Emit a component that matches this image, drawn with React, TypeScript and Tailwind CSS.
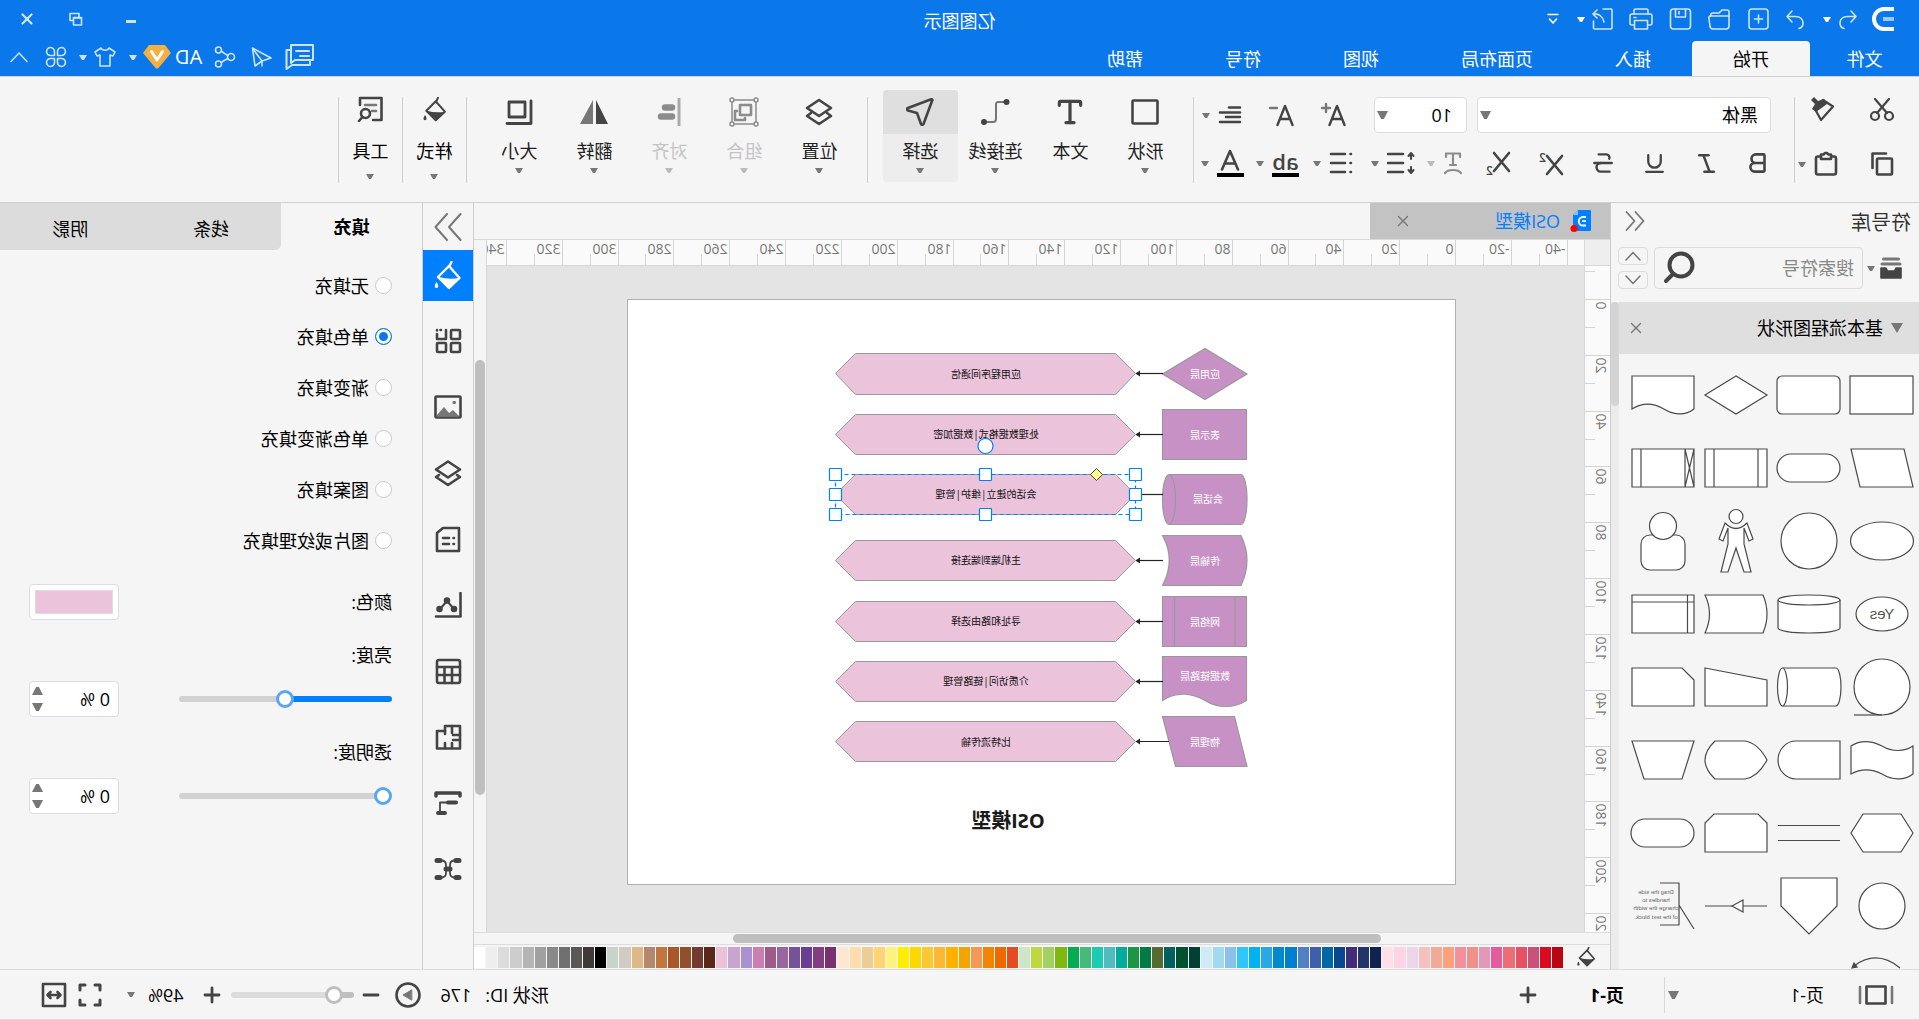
import React from 'react';
import { Bold, Italic, Strikethrough, Type, Underline, X } from 'lucide-react';

type Kids = { children?: React.ReactNode };

function Svg({ w = 24, h = 24, sw = 2, children }: Kids & { w?: number; h?: number; sw?: number }) {
  return (
    <svg width={w} height={h} viewBox={`0 0 ${w} ${h}`} fill="none" stroke="currentColor" strokeWidth={sw} strokeLinecap="round" strokeLinejoin="round" className="shrink-0" aria-hidden="true">
      {children}
    </svg>
  );
}

function Caret({ big = false }: { big?: boolean }) {
  return (
    <svg width={big ? 11 : 8} height={big ? 8 : 5} viewBox="0 0 8 5" preserveAspectRatio="none" fill="currentColor" className="shrink-0" aria-hidden="true">
      <path d="M0 0H8L5 5H3Z" />
    </svg>
  );
}

function Bucket({ size = 24 }: { size?: number }) {
  return (
    <svg width={size} height={size} viewBox="0 0 28 29" fill="none" stroke="currentColor" strokeWidth="2.4" strokeLinejoin="round" strokeLinecap="round" aria-hidden="true">
      <path d="M10 1L12.500 6" />
      <path d="M12.500 5L23.500 16L12.500 27L2 17Z" />
      <path d="M2 17Q12 19 23 16L12.500 28Z" fill="currentColor" stroke="none" />
      <path d="M25 21c2 2.800 2.600 6 0 6s-2-3.200 0-6z" fill="currentColor" stroke="none" />
    </svg>
  );
}

function TitleBar() {
  return (
    <div className="relative flex h-[38px] items-center pl-[25px] pr-[18px] text-[#cfe4fc]">
      <svg width="22" height="24" viewBox="0 0 22 24" fill="none" strokeWidth="4" strokeLinecap="square" aria-hidden="true">
        <path d="M2 2H10A10 10 0 0 1 10 22H2" stroke="#fff" />
        <path d="M2 12H9" stroke="#9cc8f8" />
      </svg>
      <button aria-label="撤销" className="ml-3.5">
        <Svg w={20} h={22} sw={1.6}><path d="M7 3L2 8.500L7 14M2 8.500H10C16 8.500 18 12 18 15C18 18 16 20 14 20.500" /></Svg>
      </button>
      <button aria-label="撤销列表" className="ml-[7px] text-white"><Caret /></button>
      <button aria-label="恢复" className="ml-[18px]">
        <Svg w={20} h={22} sw={1.6}><path d="M13 3L18 8.500L13 14M18 8.500H10C4 8.500 2 12 2 15C2 18 4 20 6 20.500" /></Svg>
      </button>
      <button aria-label="新建" className="ml-4">
        <Svg w={22} h={22} sw={1.6}><rect x="1" y="1" width="19" height="20" rx="3" /><path d="M10.500 7V15M6.500 11H14.500" /></Svg>
      </button>
      <button aria-label="打开" className="ml-4">
        <Svg w={24} h={22} sw={1.6}><path d="M2 8V4C2 2.500 3 2 4 2H9L12 5H18C19.500 5 20.500 6 20.500 8" /><path d="M2 8H20C22 8 22.500 9 22 11L21 18C20.800 20 20 21 18 21H5C3 21 2 20 2 18Z" /></Svg>
      </button>
      <button aria-label="保存" className="ml-[15px]">
        <Svg w={24} h={22} sw={1.6}><rect x="1.500" y="1" width="20" height="20" rx="3" /><path d="M6.500 1V9H16.500V1M13 3.500V6" /></Svg>
      </button>
      <button aria-label="打印" className="ml-[15px]">
        <Svg w={24} h={22} sw={1.6}><path d="M5 6V2.500C5 1.500 6 1 7 1H17C18 1 19 1.500 19 2.500V6" /><path d="M5 17H3C2 17 1 16 1 15V8C1 7 2 6 3 6H21C22 6 23 7 23 8V15C23 16 22 17 21 17H19" /><path d="M5.500 12.500H18.500V21H5.500ZM17 9.500H19" /></Svg>
      </button>
      <button aria-label="导出" className="ml-4">
        <Svg w={22} h={22} sw={1.6}><path d="M10 1H2C1.500 1 1 1.500 1 2V20C1 20.500 1.500 21 2 21H18C19 21 19.500 20.500 19.500 20V13" /><path d="M16 2L20 6L16 10M20 6C14 5 10 9 9 14" /></Svg>
      </button>
      <button aria-label="导出列表" className="ml-1.5 text-white"><Caret /></button>
      <button aria-label="自定义" className="ml-[18px] text-white">
        <Svg w={12} h={12} sw={1.6}><path d="M1 1.500H11M2.500 6L6 10L9.500 6" /></Svg>
      </button>
      <h1 className="absolute left-1/2 -translate-x-1/2 pt-1 text-lg leading-6 text-white max-lg:hidden">亿图图示</h1>
      <div className="ml-auto flex items-center">
        <button aria-label="最小化" className="flex h-5 w-10 items-center justify-center"><span className="mt-1 h-[3px] w-2.5 bg-current" /></button>
        <button aria-label="还原" className="ml-[23px] mr-[13px] flex h-5 w-6 items-center justify-center">
          <Svg w={14} h={15} sw={1.6}><path d="M4 5V1.500H13V8.500H10" /><rect x="1.500" y="5.500" width="8" height="7.500" /><path d="M1.500 6H9.500" /></Svg>
        </button>
        <button aria-label="关闭" className="ml-[15px] flex items-center"><X size={18} strokeWidth={3} /></button>
      </div>
    </div>
  );
}

const menus = ['插入', '页面布局', '视图', '符号', '帮助'];

function MenuBar() {
  return (
    <div className="flex h-[38px] items-end text-lg leading-6 text-white">
      <button className="h-[35px] w-[109px]">文件</button>
      <button className="h-[35px] rounded-t-sm bg-[#f5f5f5] px-[41px] text-black">开始</button>
      {menus.map((name) => (
        <button key={name} className="h-[35px] px-[41px]">{name}</button>
      ))}
      <div className="ml-auto flex h-full items-center pr-2.5 text-[#cfe4fc]">
        <button aria-label="评论">
          <Svg w={30} h={28} sw={2}><path d="M2 2H24V20L20 17H2Z" /><path d="M6 8H19M6 13H15" /><path d="M25 7H28.500V26L23 22H5V18" /></Svg>
        </button>
        <button aria-label="发送" className="ml-3">
          <Svg w={22} h={22} sw={1.6}><path d="M20.500 2L18 20L11 15L2 12Z" /><path d="M20 3L11 15V20" /></Svg>
        </button>
        <button aria-label="分享" className="ml-[15px]">
          <Svg w={22} h={22} sw={1.6}><circle cx="5" cy="11" r="3.500" /><circle cx="17.500" cy="4" r="3" /><circle cx="17.500" cy="18" r="3" /><path d="M8 9.500C10 8 12 8 14 5.500M8 12.500C10 14 12 14 14.500 16.500" /></Svg>
        </button>
        <button className="ml-3 text-xl leading-6 text-white">AD</button>
        <button aria-label="会员" className="ml-1">
          <svg width="28" height="24" viewBox="0 0 28 24" aria-hidden="true"><path d="M6 0H22L28 8L15.500 23Q14 24.500 12.500 23L0 8Z" fill="#f5b13f" /><path d="M8.500 6.500L14 15L19.500 6.500" fill="none" stroke="#fff" strokeWidth="3" strokeLinecap="round" strokeLinejoin="round" /></svg>
        </button>
        <button aria-label="会员列表" className="ml-1.5"><Caret /></button>
        <button aria-label="主题" className="ml-3">
          <Svg w={24} h={22} sw={1.6}><path d="M8 2C9 5 15 5 16 2L22 6L20 10L17 9V20H7V9L4 10L2 6Z" /></Svg>
        </button>
        <button aria-label="主题列表" className="ml-1.5"><Caret /></button>
        <button aria-label="应用" className="ml-3">
          <Svg w={22} h={22} sw={1.6}><path d="M9.500 9.500V6A4 4 0 1 0 6 9.500ZM12.500 9.500V6A4 4 0 1 1 16 9.500ZM9.500 12.500V16A4 4 0 1 1 6 12.500ZM12.500 12.500V16A4 4 0 1 0 16 12.500Z" /></Svg>
        </button>
        <button aria-label="收起功能区" className="ml-[17px]">
          <Svg w={18} h={12} sw={1.5}><path d="M1 10.500L9 2L17 10.500" /></Svg>
        </button>
      </div>
    </div>
  );
}

function Divider() {
  return <div className="h-[86px] w-px shrink-0 self-start bg-[#cfcfcf]" />;
}

function BigButton({ label, caret = true, active = false, off = false, children }: Kids & { label: string; caret?: boolean; active?: boolean; off?: boolean }) {
  return (
    <button disabled={off} className={`-mt-[7px] flex h-[92px] w-[75px] shrink-0 flex-col items-center rounded-sm ${active ? 'bg-[#ededed]' : ''} ${off ? 'text-[#8c8c8c]' : 'text-[#444]'}`}>
      <span className={`flex h-11 w-full items-center justify-center rounded-t-sm ${active ? 'bg-[#dfdfdf]' : ''}`}>{children}</span>
      <span className={`mt-[5px] text-lg leading-6 ${off ? 'text-[#c4c4c4]' : 'text-[#222]'}`}>{label}</span>
      {caret && <span className={`mt-[5px] ${off ? 'text-[#bbb]' : 'text-[#777]'}`}><Caret /></span>}
    </button>
  );
}

function ThinButton({ label, children }: Kids & { label: string }) {
  return (
    <button className="flex h-[86px] w-[63px] shrink-0 flex-col items-center text-[#444]">
      <span className="flex h-6 items-center">{children}</span>
      <span className="mt-[18px] text-lg leading-6 text-black">{label}</span>
      <span className="mt-[11px] text-[#777]"><Caret /></span>
    </button>
  );
}

function Tool({ label, caret = false, off = false, children }: Kids & { label: string; caret?: boolean; off?: boolean }) {
  return (
    <button aria-label={label} disabled={off} className={`flex items-center gap-2 ${off ? 'text-[#8c8c8c]' : 'text-[#444]'}`}>
      {children}
      {caret && <span className={off ? 'text-[#bbb]' : 'text-[#777]'}><Caret /></span>}
    </button>
  );
}

function Combo({ label, value, wide = false }: { label: string; value: string; wide?: boolean }) {
  return (
    <label className={`relative flex h-9 items-center rounded-sm border border-[#dcdde0] bg-white ${wide ? 'w-[294px]' : 'w-[93px]'}`}>
      <select aria-label={label} className={`h-full w-full appearance-none text-lg leading-6 text-black ${wide ? 'pl-3' : 'pl-3.5'}`}>
        <option>{value}</option>
      </select>
      <span className="pointer-events-none absolute right-0.5 flex text-[#777]"><Caret big /></span>
    </label>
  );
}

function Ribbon() {
  return (
    <div className="flex h-[127px] shrink-0 items-start overflow-hidden border-y border-[#d0d0d0] bg-[#f5f5f5] pl-6 pt-5">
      <div className="flex h-[86px] w-[100px] shrink-0 flex-col gap-7">
        <div className="flex gap-[34px]">
          <Tool label="剪切"><Svg w={26} h={26} sw={2.2}><circle cx="6" cy="19" r="4" /><circle cx="20" cy="19" r="4" /><path d="M8 16L20 2M18 16L6 2" /></Svg></Tool>
          <Tool label="格式刷"><Svg w={26} h={26} sw={2.2}><path d="M12 3L2 9.500L14 23L20 12Z" /><path d="M11 2L8 7L19 15L23 12L20 7L24 3L21 0L17 4Z" fill="currentColor" stroke="none" /></Svg></Tool>
        </div>
        <div className="flex gap-[31px]">
          <Tool label="复制"><Svg w={26} h={26} sw={2.6}><rect x="3" y="7.500" width="15" height="16" rx="1" /><path d="M9 2.500H22.500V17" /></Svg></Tool>
          <Tool label="粘贴" caret><Svg w={24} h={26} sw={2.6}><rect x="2" y="5.500" width="20" height="18" rx="2" /><path d="M7 8V3.500H9.500L11 2H13L14.500 3.500H17V8Z" fill="#f5f5f5" /></Svg></Tool>
        </div>
      </div>
      <Divider />
      <div className="ml-[23px] h-[86px] w-[577px] shrink-0">
        <div className="flex items-center">
          <Combo label="字体" value="黑体" wide />
          <div className="w-2.5" />
          <Combo label="字号" value="10" />
          <div className="flex items-center pl-7">
            <Tool label="增大字号"><Svg w={28} h={26} sw={2.4}><path d="M1.500 23L9 4L16.500 23M4 17H14" /><path d="M16 6H24M20 2V10" stroke="#777" /></Svg></Tool>
            <div className="w-6" />
            <Tool label="减小字号"><Svg w={28} h={26} sw={2.4}><path d="M1.500 23L9 4L16.500 23M4 17H14" /><path d="M17 6H24" stroke="#777" /></Svg></Tool>
            <div className="w-6" />
            <Tool label="对齐方式" caret><Svg w={24} h={20} sw={2.6}><path d="M2 2.500H13M2 7.500H22M2 12H16M2 17H22" /></Svg></Tool>
          </div>
        </div>
        <div className="mt-4 flex h-7 items-center">
          <Tool label="加粗"><Bold size={26} strokeWidth={2.4} /></Tool>
          <div className="w-[26px]" />
          <Tool label="斜体"><Italic size={25} strokeWidth={2.4} /></Tool>
          <div className="w-[27px]" />
          <Tool label="下划线"><Underline size={25} strokeWidth={2.2} /></Tool>
          <div className="w-[26px]" />
          <Tool label="删除线"><Strikethrough size={26} strokeWidth={2.2} /></Tool>
          <div className="w-[26px]" />
          <Tool label="上标"><Svg w={26} h={26} sw={2.6}><path d="M2 6L17 24M17 6L2 24" /><text x="18" y="12" fontSize="12" fontWeight="600" fill="currentColor" stroke="none">2</text></Svg></Tool>
          <div className="w-[27px]" />
          <Tool label="下标"><Svg w={26} h={26} sw={2.6}><path d="M2 3L17 21M17 3L2 21" /><text x="18" y="25" fontSize="12" fontWeight="600" fill="currentColor" stroke="none">2</text></Svg></Tool>
          <div className="w-[22px]" />
          <Tool label="文字排列" caret off><Svg w={20} h={26} sw={2.2}><path d="M3 7V3.500H17V7M10 4V15M7 15H13M2 23C5 19 15 19 18 23" /></Svg></Tool>
          <div className="w-3" />
          <Tool label="行距" caret><Svg w={28} h={24} sw={2.6}><path d="M12 3H27M12 12H27M12 21H27" /><path d="M4 3V8M4 16V21M1.500 5L4 2L6.500 5M1.500 19L4 22L6.500 19" strokeWidth="2" /></Svg></Tool>
          <div className="w-[18px]" />
          <Tool label="项目符号" caret><Svg w={24} h={24} sw={2.6}><path d="M8 3H22M8 12H22M8 21H22" /><path d="M2 3H2.500M2 12H2.500M2 21H2.500" /></Svg></Tool>
          <div className="w-3.5" />
          <Tool label="突出显示" caret><span className="w-[27px] border-b-4 border-black text-center text-[22px] font-semibold leading-6">ab</span></Tool>
          <div className="w-3" />
          <Tool label="字体颜色" caret><span className="flex w-[27px] flex-col items-center border-b-4 border-black pb-0.5"><Svg w={22} h={22} sw={2.6}><path d="M3 20.500L11 2L19 20.500M5.500 14.500H16.500" /></Svg></span></Tool>
        </div>
      </div>
      <Divider />
      <div className="w-2.5 shrink-0" />
      <BigButton label="形状"><Svg w={28} h={26} sw={2.6}><rect x="1.500" y="1.500" width="25" height="23" rx="1" /></Svg></BigButton>
      <BigButton label="文本" caret={false}><Type size={32} strokeWidth={2.4} /></BigButton>
      <BigButton label="连接线"><Svg w={30} h={26} sw={2}><path d="M6 3H11C14 3 14 4 14 6V20C14 22 15 23 17 23H24" stroke="#777" /><circle cx="3.500" cy="3" r="2" fill="currentColor" /><circle cx="26" cy="23" r="2" fill="currentColor" /></Svg></BigButton>
      <BigButton label="选择" active><Svg w={28} h={28} sw={2.6}><path d="M2 3C1 1.500 2 0.800 3.500 1.500L26 10C27.500 10.800 27 12 26 12.500L17 15L13 26C12 27.500 11 27 10.500 26Z" /></Svg></BigButton>
      <div className="w-[15px] shrink-0" />
      <Divider />
      <div className="w-2.5 shrink-0" />
      <BigButton label="位置"><Svg w={28} h={28} sw={2.6}><path d="M14 2L26 10L14 18L2 10Z" /><path d="M6 15L2 18L14 26L26 18L22 15" /></Svg></BigButton>
      <BigButton label="组合" off><Svg w={30} h={30} sw={1.5}><path d="M3 5V25M27 5V25M5 3H25M5 27H25" /><circle cx="3" cy="3" r="2" /><circle cx="27" cy="3" r="2" /><circle cx="3" cy="27" r="2" /><circle cx="27" cy="27" r="2" /><rect x="8" y="8" width="11" height="10" strokeWidth="2.600" /><path d="M14 21V23H24V14H22" strokeWidth="2.600" /></Svg></BigButton>
      <BigButton label="对齐" off><Svg w={24} h={28} sw={2}><path d="M2 1V27" stroke="#aaa" strokeWidth="3" /><path d="M9 9.500H16M9 18.500H20" strokeWidth="6.500" /></Svg></BigButton>
      <BigButton label="翻转"><Svg w={28} h={26} sw={2}><path d="M12 1V25H0Z" fill="currentColor" stroke="none" /><path d="M15 1V25H28Z" fill="#777" stroke="none" /></Svg></BigButton>
      <BigButton label="大小"><Svg w={28} h={28} sw={2.8}><path d="M2 3V25.500H26" /><rect x="8" y="4" width="16" height="15" /></Svg></BigButton>
      <div className="w-[15px] shrink-0" />
      <Divider />
      <ThinButton label="样式"><Bucket size={25} /></ThinButton>
      <Divider />
      <ThinButton label="工具"><Svg w={28} h={26} sw={2.6}><path d="M11 24H2.500V2H24V9" /><path d="M8 9H19M8 15H12" stroke="#777" /><circle cx="18.500" cy="17.500" r="4.500" /><path d="M21.500 21L25 25" /></Svg></ThinButton>
      <Divider />
    </div>
  );
}

// Each library shape is drawn round the centre of its own cell
const shapes: React.ReactNode[] = [
  <rect x="-31" y="-19" width="63" height="38" />,
  <rect x="-31" y="-19" width="63" height="38" rx="5" />,
  <path d="M0 -19L31 0L0 19L-31 0Z" />,
  <path d="M-31 -19H31V14C20 7 10 8 0 13.500C-10 20 -22 21 -31 14Z" />,
  <path d="M31 -19H-22L-31 19H22Z" />,
  <rect x="-31" y="-14" width="63" height="28" rx="14" />,
  <path d="M-31 -19H31V19H-31ZM-22 -19V19M22 -19V19" />,
  <path d="M-31 -19H31V19H-31ZM-22 -19V19M22 -19V19M-31 -19L-22 19M-22 -19L-31 19" />,
  <ellipse rx="31.500" ry="19" />,
  <circle r="28" />,
  <><circle cy="-24.500" r="7" /><path d="M-11 -18Q0 -7 11 -18L17 -2L13 0L8 -13V3L15 31H8L0 7L-8 31H-15L-8 3V-13L-13 0L-17 -2Z" /></>,
  <><rect x="-22" y="-6" width="44" height="35" rx="9" /><circle cy="-15" r="13.500" /></>,
  <><ellipse rx="26" ry="17" /><text y="5" textAnchor="middle" fontSize="15" fill="#555" stroke="none" className="font-['Liberation_Sans',sans-serif]">Yes</text></>,
  <><path d="M-31 -14V14A31 5 0 0 0 31 14V-14" /><ellipse cy="-14" rx="31" ry="5" /></>,
  <path d="M31 -19H-27Q-35 0 -27 19H31Q22 0 31 -19Z" />,
  <path d="M-31 -19H31V19H-31ZM-24.500 -19V19M-31 -12H31" />,
  <><circle r="28" /><path d="M0 28H28" /></>,
  <><path d="M26.500 -19H-27A5 19 0 0 0 -27 19H26.500" /><ellipse cx="26.500" rx="5" ry="19" /></>,
  <path d="M31 -19L-31 -7V19H31Z" />,
  <path d="M-31 -7L-19 -19H31V19H-31Z" />,
  <path d="M31 -14C20 -21 10 -19 0 -14C-10 -8 -22 -8 -31 -14V14C-22 21 -10 20 0 14C10 9 20 8 31 14Z" />,
  <path d="M-31 -19H13A18 19 0 0 1 13 19H-31Z" />,
  <path d="M21 -19H-9Q-22 -17 -31 0Q-22 17 -9 19H21Q41 0 21 -19Z" />,
  <path d="M-31 -19H31L19 19H-19Z" />,
  <path d="M-31 0L-19 -19H19L31 0L19 19H-19Z" />,
  <path d="M-31 -7.500H31M-31 7.500H31" />,
  <path d="M-31 -10L-22 -19H22L31 -10V19H-31Z" />,
  <rect x="-31" y="-14" width="63" height="28" rx="14" />,
  <circle r="23" />,
  <path d="M-28 -28H28V0L0 28L-28 0Z" />,
  <><path d="M-31 0H31" /><path d="M4 0L-7 -6V6Z" /></>,
  <>
    <path d="M3 -23H-16V19H3M-16 -1L-31 23" fill="none" />
    <g fontSize="6" fill="#666" stroke="none" textAnchor="middle" className="font-['Liberation_Sans',sans-serif]">
      <text x="7" y="-12">Drag the side</text><text x="7" y="-4">handles to</text><text x="7" y="4">change the width</text><text x="7" y="13">of the text block.</text>
    </g>
  </>,
  <><path d="M-18 -11Q5 -30 28 -13" fill="none" /><path d="M30 -11L25 -12L28 -16Z" fill="#444" /></>,
];

function Library() {
  return (
    <aside className="flex w-[309px] shrink-0 flex-col border-r border-[#cdcdcd] bg-[#f5f5f5]">
      <div className="flex h-[99px] shrink-0 flex-col">
        <div className="flex h-9 items-center justify-between pl-2 pr-3.5">
          <h2 className="pt-1 text-xl leading-6 text-[#333]">符号库</h2>
          <button aria-label="收起" className="text-[#777]"><Svg w={20} h={20} sw={1.8}><path d="M9.500 1L1.500 10L9.500 19M18.500 1L10.500 10L18.500 19" /></Svg></button>
        </div>
        <div className="flex items-center pl-4 pt-2">
          <button aria-label="符号分类" className="flex w-10 items-center gap-1 text-[#444]">
            <Svg w={24} h={24} sw={1.6}><path d="M2 12H7L8.500 15H15.500L17 12H22V22H2Z" fill="currentColor" /><path d="M4.500 3H19.500M3 8H21" stroke="#777" strokeWidth="3" /></Svg>
            <span className="text-[#777]"><Caret /></span>
          </button>
          <label className="flex h-[42px] w-[209px] items-center rounded-sm border border-[#dcdcdc] pl-2 pr-2">
            <input aria-label="搜索符号" placeholder="搜索符号" className="min-w-0 flex-1 text-lg leading-6 placeholder:text-[#888]" />
            <span className="text-[#444]"><Svg w={34} h={34} sw={4}><circle cx="16" cy="14" r="11.500" /><path d="M24 23L31 30" /></Svg></span>
          </label>
          <div className="ml-1.5 flex flex-col gap-1.5 text-[#777]">
            <button aria-label="上一个" className="flex h-[18px] w-[30px] items-center justify-center rounded-sm border border-[#dcdcdc]"><Svg w={18} h={10} sw={1.5}><path d="M2 9L9 1.500L16 9" /></Svg></button>
            <button aria-label="下一个" className="flex h-[18px] w-[30px] items-center justify-center rounded-sm border border-[#dcdcdc]"><Svg w={18} h={10} sw={1.5}><path d="M2 1L9 8.500L16 1" /></Svg></button>
          </div>
        </div>
      </div>
      <div className="flex min-h-0 flex-1">
        <div className="min-w-0 flex-1 overflow-hidden">
          <div className="flex h-[52px] items-center bg-[#dfdfdf] pl-4 pr-2">
            <span className="flex text-[#777]"><Svg w={12} h={10}><path d="M0 0H12L6 10Z" fill="currentColor" stroke="none" /></Svg></span>
            <h3 className="ml-2 text-lg leading-6 text-black">基本流程图形状</h3>
            <button aria-label="关闭" className="ml-auto text-[#777]"><X size={18} strokeWidth={1.8} /></button>
          </div>
          <div className="grid w-[292px] grid-cols-4 pt-1">
            {shapes.map((shape, i) => (
              <svg key={i} viewBox="-37 -37 73 73" className="h-[73px] w-[73px]" fill="#fff" stroke="#4a4a4a" strokeWidth="1.200" aria-hidden="true">{shape}</svg>
            ))}
          </div>
        </div>
        <div className="w-2 bg-[#ececec]"><div className="h-[104px] rounded-full bg-[#d4d4d4]" /></div>
      </div>
    </aside>
  );
}

const STEP = 55.83;
const topMarks = Array.from({ length: 20 }, (_, i) => i - 2);
const sideMarks = Array.from({ length: 13 }, (_, i) => i - 1);

function TopRuler() {
  return (
    <svg className="block h-full w-full" aria-hidden="true">
      {topMarks.map((n) => {
        const x = Math.round(128 + n * STEP) + 0.5;
        const half = Math.round(128 + (n + 0.5) * STEP) + 0.5;
        return (
          <g key={n} stroke="#d4d4d4">
            <path d={`M${x} 0V26M${half} 14V26`} />
            <text x={x + 2} y="14" fontSize="14" fill="#777" stroke="none">{n * 20}</text>
          </g>
        );
      })}
    </svg>
  );
}

function SideRuler() {
  return (
    <svg className="block h-full w-full" aria-hidden="true">
      {sideMarks.map((n) => {
        const y = Math.round(33 + n * STEP) + 0.5;
        const half = Math.round(33 + (n + 0.5) * STEP) + 0.5;
        return (
          <g key={n} stroke="#d4d4d4">
            <path d={`M0 ${y}H26M15 ${half}H26`} />
            {n >= 0 && <text transform={`translate(14 ${y + 2}) rotate(-90)`} textAnchor="end" fontSize="14" fill="#777" stroke="none">{n * 20}</text>}
          </g>
        );
      })}
    </svg>
  );
}

const layers = [
  { name: '应用层', task: '应用程序间通信', y: 54, h: 41, x: 251, from: 293 },
  { name: '表示层', task: '处理数据格式|数据加密', y: 115, h: 40, x: 251, from: 293 },
  { name: '会话层', task: '会话的建立|维护|管理', y: 175, h: 40, x: 248, from: 293 },
  { name: '传输层', task: '主机端到端连接', y: 241, h: 40, x: 251, from: 293 },
  { name: '网络层', task: '寻址和路由选择', y: 302, h: 40, x: 251, from: 293 },
  { name: '数据链路层', task: '介质访问|链路管理', y: 362, h: 40, x: 251, from: 293 },
  { name: '物理层', task: '比特流传输', y: 422, h: 40, x: 251, from: 287 },
];

const handles = [[320, 175], [470, 175], [620, 175], [320, 195], [620, 195], [320, 215], [470, 215], [620, 215]];

function Diagram() {
  return (
    <svg width="829" height="586" viewBox="0 0 829 586" className="block shrink-0" role="img" aria-label="OSI模型">
      <rect x="0.500" y="0.500" width="828" height="585" fill="#fff" stroke="#b0b0b0" />
      <g fill="#c791c6" stroke="#999" strokeWidth="1.200">
        <path d="M251 49.500L293.500 75L251 100.500L209 75Z" />
        <path d="M209.500 110.500H293.500V160.500H209.500Z" />
        <path d="M287 175.500H215A6 25 0 0 0 215 225.500H287" />
        <ellipse cx="287" cy="200.500" rx="6.500" ry="25" />
        <path d="M215 236.500H293.500Q280 261 293.500 286.500H215Q203 261 215 236.500Z" />
        <path d="M209.500 297.500H293.500V347.500H209.500ZM221 297.500V347.500M281.500 297.500V347.500" />
        <path d="M209.500 357.500H293.500V401.500C278 391 262 395 251 401.500C239 409 223 410 209.500 401.500Z" />
        <path d="M293.500 417.500H221.500L209 467.500H280.500Z" />
      </g>
      {layers.map((layer, i) => {
        const mid = layer.y + Math.floor(layer.h / 2) + 0.5;
        return (
          <g key={layer.name} fontSize="10" textAnchor="middle">
            <path d={`M${layer.from} ${mid}H320`} stroke="#222" strokeWidth="1.200" />
            {i !== 2 && <path d={`M320.500 ${mid}L316 ${mid - 3}V${mid + 3}Z`} fill="#222" />}
            <path d={`M320.500 ${mid}L340.500 ${layer.y + 0.5}H600.500L620.500 ${mid}L600.500 ${layer.y + layer.h + 0.5}H340.500Z`} fill="#ebc3db" stroke="#999" />
            <text x={layer.x} y={mid + (i === 2 ? 8 : i === 5 ? -2 : 4)} fill="#fff">{layer.name}</text>
            <text x="470" y={mid + (i === 0 || i === 6 ? 4 : 3)} fill="#111">{layer.task}</text>
          </g>
        );
      })}
      <text x="448" y="529" fontSize="20" fontWeight="700" textAnchor="middle" fill="#1a1a1a">OSI模型</text>
      <rect x="320.500" y="175.500" width="300" height="40" fill="none" stroke="#0080ff" strokeDasharray="4 3" strokeWidth="1.200" />
      <g fill="#fff" stroke="#0080ff" strokeWidth="1.200">
        {handles.map(([x, y]) => <rect key={`${x}-${y}`} x={x - 5.5} y={y - 5.5} width="12" height="12" rx="0.500" />)}
        <circle cx="470.500" cy="147" r="7.500" />
      </g>
      <path d="M359.500 169.500L365.500 175.500L359.500 181.500L353.500 175.500Z" fill="#ffff8c" stroke="#444" />
    </svg>
  );
}

const palette = [
  '#b80613', '#d90a1e', '#c9517a', '#e75263', '#ec6d73', '#e55c9c', '#e298b6', '#ee918a', '#f2919c', '#ffa07a',
  '#f0ab97', '#f6c0bd', '#ebd6e9', '#fdd4e4', '#ffe0e6', '#10224f', '#213569', '#432d7a', '#07478d', '#0068a6',
  '#3e5fad', '#5181c3', '#007fcf', '#0089ce', '#2ba8e3', '#00b2ef', '#2ec7fb', '#8bc0ea', '#a0d9f0', '#cdeaf6',
  '#004033', '#00522f', '#006160', '#556b2f', '#007b43', '#1b9642', '#00ad9d', '#4fbcc0', '#1bccb1', '#46ba7b',
  '#00ae51', '#7fb80e', '#a1d063', '#bfd83f', '#cde6c7', '#e34d1f', '#ee6a00', '#f38400', '#f39955', '#f2a500',
  '#ffb000', '#fdb833', '#f9c832', '#ffd700', '#ffee00', '#fef27f', '#fdd474', '#eccd96', '#fedcab', '#fce8d0',
  '#79306f', '#843d80', '#683f95', '#745399', '#9966a0', '#9d5a8a', '#cc7eb1', '#a991cf', '#c7a5cc', '#ebc2da',
  '#592819', '#733a30', '#924f2b', '#a85728', '#c0763f', '#b5886e', '#deb887', '#d3cac5', '#cad3cb', '#000000',
  '#403938', '#595757', '#717071', '#898989', '#9fa09f', '#b5b5b6', '#cccdcd', '#dcdcdc', '#eeeeee', '#ffffff',
];

function Workspace() {
  return (
    <main className="flex min-w-0 flex-1 flex-col">
      <div className="flex h-[37px] shrink-0 border-b border-[#d8d8d8]">
        <div className="flex w-60 items-center bg-[#c3c3c3] pl-[18px] pr-6">
          <svg width="22" height="24" viewBox="0 0 22 24" aria-hidden="true">
            <path d="M2 1H14L19 6V21Q19 22 18 22H2Q1 22 1 21V2Q1 1 2 1Z" fill="#0080ff" />
            <path d="M14 1L19 6H14Z" fill="#8cc4ff" />
            <path d="M6 8H9A4 4 0 0 1 9 16.500H6M6 12.200H10" fill="none" stroke="#fff" strokeWidth="1.800" />
            <circle cx="18" cy="19.500" r="3.500" fill="#f00" />
          </svg>
          <span className="ml-2.5 text-lg leading-6 text-[#0080ff]">OSI模型</span>
          <button aria-label="关闭文档" className="ml-auto text-[#777]"><X size={18} strokeWidth={1.8} /></button>
        </div>
      </div>
      <div className="flex min-h-0 flex-1">
        <div className="flex min-w-0 flex-1 flex-col">
          <div className="flex h-[26px] shrink-0 border-b border-[#d8d8d8] bg-[#fafafa]">
            <div className="w-[26px] shrink-0 border-r border-[#d8d8d8] bg-[#eee]" />
            <div className="min-w-0 flex-1 overflow-hidden"><TopRuler /></div>
          </div>
          <div className="flex min-h-0 flex-1">
            <div className="w-[26px] shrink-0 overflow-hidden border-r border-[#d8d8d8] bg-[#fafafa]"><SideRuler /></div>
            <div className="min-w-0 flex-1 overflow-hidden bg-[#e4e4e4] pl-32 pt-[33px]"><Diagram /></div>
          </div>
        </div>
        <div className="w-[13px] shrink-0 border-l border-[#d8d8d8] px-px pt-[120px]"><div className="h-[435px] rounded-full bg-[#bfbfbf]" /></div>
      </div>
      <div className="h-[13px] shrink-0 border-y border-[#dcdcdc] pl-[229px] pr-[259px] pt-px"><div className="h-[9px] rounded-full bg-[#bfbfbf]" /></div>
      <div className="flex h-6 shrink-0 items-center">
        <button aria-label="填充颜色" className="flex w-[47px] shrink-0 items-center pl-3.5 text-[#444]"><Bucket size={20} /></button>
        <div className="flex h-[21px] min-w-0 flex-1 gap-px">
          {palette.map((color) => <button key={color} aria-label={color} className="min-w-0 flex-1" style={{ backgroundColor: color }} />)}
        </div>
      </div>
    </main>
  );
}

const sideTools = [
  { name: '符号', icon: <><rect x="2" y="2" width="9" height="9" rx="1" /><rect x="2" y="15" width="9" height="9" rx="1" /><rect x="16" y="15" width="9" height="9" rx="1" /><path d="M16 2V11H25V6M21 2H21.500M25 2V2.500" /></> },
  { name: '图片', icon: <><rect x="1.500" y="2.500" width="25" height="21" rx="1" /><path d="M3 22L9 16L13 19L18 13L25 21V22Z" fill="#777" stroke="none" /><path d="M7 7.500H9V9.500H7Z" fill="#777" stroke="#777" strokeWidth="1" /></> },
  { name: '图层', icon: <><path d="M14 1.500L26 9.500L14 17.500L2 9.500Z" /><path d="M5 15L2 17L14 25L26 17L23 15" /></> },
  { name: '备注', icon: <><path d="M3 2H19L25 7V25H3Z" /><path d="M13 12H19M13 18H19M8 12H8.500M8 18H8.500" /></> },
  { name: '图表', icon: <><path d="M1.500 1V24.500H26" /><path d="M8 17L15 9L22 17" strokeWidth="2" /><circle cx="8" cy="17" r="2" fill="currentColor" /><circle cx="15" cy="8.500" r="2" fill="currentColor" /><circle cx="22.500" cy="17" r="2" fill="currentColor" /></> },
  { name: '表格', icon: <><rect x="2" y="2" width="23" height="23" rx="2" /><path d="M2 9H25M2 17H25M10 9V25M17.500 9V25" /></> },
  { name: '平面图', icon: <><path d="M2 2H17V7H25V24.500H2Z" /><path d="M10 2V9M2 16H9M9 11H2M17 7V10M17 24V19M10 24V19" /></> },
  { name: '甘特图', icon: <><path d="M2 6V3H26V6" strokeWidth="3.500" /><path d="M6 12.500H14M17 23H24" strokeWidth="4" /><path d="M15 12.500H22V22" strokeWidth="1.800" /></> },
  { name: '思维导图', icon: <><path d="M3 4.500H6M22 4.500H25M3 21.500H6M22 21.500H25M12 13H16" strokeWidth="5" /><path d="M6 4.500H8Q12 5 12 9V17Q12 21 8 21.500M22 4.500H20Q16 5 16 9V17Q16 21 20 21.500" strokeWidth="1.800" /></> },
];

function SideStrip() {
  return (
    <nav className="flex w-[51px] shrink-0 flex-col border-l border-[#cdcdcd]">
      <button aria-label="展开" className="flex h-[47px] shrink-0 items-center justify-center text-[#777]">
        <Svg w={28} h={28} sw={2}><path d="M1.500 1L13 14L1.500 27M15 1L26.500 14L15 27" /></Svg>
      </button>
      <button aria-label="填充" className="flex h-[51px] shrink-0 items-center justify-center bg-[#0080ff] text-white"><Bucket size={29} /></button>
      <div className="flex flex-col pt-[7px]">
        {sideTools.map((tool) => (
          <button key={tool.name} aria-label={tool.name} className="flex h-[66px] items-center justify-center text-[#444]">
            <Svg w={28} h={27} sw={2.6}>{tool.icon}</Svg>
          </button>
        ))}
      </div>
    </nav>
  );
}

const fills = ['无填充', '单色填充', '渐变填充', '单色渐变填充', '图案填充', '图片或纹理填充'];

const thumb =
  '[&::-webkit-slider-thumb]:size-[18px] [&::-webkit-slider-thumb]:appearance-none [&::-webkit-slider-thumb]:rounded-full [&::-webkit-slider-thumb]:border-[3px] [&::-webkit-slider-thumb]:bg-white';

function Percent({ id, label, min, track }: { id: string; label: string; min: number; track: string }) {
  return (
    <div className="flex flex-col">
      <label htmlFor={id} className="text-lg leading-6">{label}</label>
      <div className="mt-3.5 flex h-9 items-center justify-between">
        <input id={id} type="range" min={min} max={100} defaultValue={0} className={`h-1.5 w-[213px] appearance-none rounded-full [&::-webkit-slider-thumb]:border-[#5aa5f5] ${thumb} ${track}`} />
        <div className="flex h-9 w-[90px] items-center rounded-sm border border-[#dcdde0] bg-white pl-2 pr-0.5">
          <input aria-label={label} defaultValue="0 %" className="min-w-0 flex-1 text-lg leading-6" />
          <div className="flex flex-col gap-2 text-[#777]">
            <button aria-label="增加" className="rotate-180"><Caret big /></button>
            <button aria-label="减少"><Caret big /></button>
          </div>
        </div>
      </div>
    </div>
  );
}

function FillPanel() {
  return (
    <aside className="flex w-[423px] shrink-0 flex-col border-l border-[#cdcdcd] text-black">
      <div role="tablist" className="grid h-[47px] shrink-0 grid-cols-3 text-lg leading-6">
        <button role="tab" aria-selected="true" className="font-bold">填充</button>
        <button role="tab" aria-selected="false" className="rounded-bl-md bg-[#dcdcdc] pt-1">线条</button>
        <button role="tab" aria-selected="false" className="bg-[#dcdcdc] pt-1">阴影</button>
      </div>
      <div className="flex flex-col pl-[30px] pr-[29px] pt-2.5">
        {fills.map((name) => (
          <label key={name} className="flex h-[51px] items-center gap-1.5 text-lg leading-6">
            <input type="radio" name="fill" defaultChecked={name === '单色填充'} className="size-[17px] appearance-none rounded-full border border-[#c8c8c8] bg-white checked:border-[#0a77ea] checked:bg-[#0a77ea] checked:shadow-[inset_0_0_0_3px_white]" />
            {name}
          </label>
        ))}
        <div className="mt-[18px] flex items-center justify-between">
          <label htmlFor="fill-color" className="text-lg leading-6">颜色:</label>
          <input id="fill-color" type="color" defaultValue="#ebc3db" className="h-9 w-[90px] rounded-sm border border-[#dcdde0] bg-white p-[5px] [&::-webkit-color-swatch]:border-[#ddd] [&::-webkit-color-swatch-wrapper]:p-0" />
        </div>
        <div className="mt-[23px] flex flex-col gap-[23px]">
          <Percent id="brightness" label="亮度:" min={-100} track="bg-linear-to-r from-[#0080ff] from-50% to-[#d2d2d2] to-50%" />
          <Percent id="opacity" label="透明度:" min={0} track="bg-[#d2d2d2]" />
        </div>
      </div>
    </aside>
  );
}

function StatusBar() {
  return (
    <footer className="flex h-[51px] shrink-0 items-center border-y border-[#dcdcdc] text-lg leading-6 text-black">
      <button aria-label="页面视图" className="ml-[25px] text-[#444]"><Svg w={36} h={22} sw={2.6}><path d="M2 3V19M34 3V19" stroke="#777" /><rect x="8.500" y="2.500" width="19" height="17" /></Svg></button>
      <span className="ml-[34px] w-[145px]">页-1</span>
      <button aria-label="页面列表" className="flex text-[#777]"><Caret big /></button>
      <div className="ml-[3px] h-9 w-px bg-[#d8d8d8]" />
      <button className="ml-10 font-bold">页-1</button>
      <button aria-label="添加页面" className="ml-[53px] text-[#444]"><Svg w={18} h={18} sw={2.8}><path d="M9 2V16M2 9H16" /></Svg></button>
      <div className="ml-auto flex items-center pr-[41px]">
        <span>形状 ID:</span>
        <span className="ml-3.5">176</span>
        <button aria-label="播放" className="ml-[19px] text-[#444]"><Svg w={26} h={26} sw={2.6}><circle cx="13" cy="13" r="11.500" /><path d="M9.500 8L18 13L9.500 18Z" fill="#777" stroke="#777" strokeWidth="1" /></Svg></button>
        <button aria-label="缩小" className="ml-[15px] text-[#444]"><Svg w={18} h={18} sw={2.8}><path d="M2 9H16" /></Svg></button>
        <input aria-label="缩放" type="range" min={0} max={100} defaultValue={11} className={`ml-2 mr-2.5 h-1.5 w-[123px] appearance-none rounded-full bg-linear-to-r from-[#bfbfbf] from-15% to-[#dcdcdc] to-15% [&::-webkit-slider-thumb]:border-[#bfbfbf] ${thumb}`} />
        <button aria-label="放大" className="text-[#444]"><Svg w={18} h={18} sw={2.8}><path d="M9 2V16M2 9H16" /></Svg></button>
        <button className="ml-5 flex items-center gap-[13px]">49%<span className="text-[#777]"><Caret /></span></button>
        <button aria-label="全屏" className="ml-6 text-[#444]"><Svg w={26} h={26} sw={3}><path d="M3 8V3H8M18 3H23V8M23 18V23H18M8 23H3V18" /></Svg></button>
        <button aria-label="适应宽度" className="ml-2.5 text-[#444]"><Svg w={26} h={26} sw={2.6}><rect x="2" y="2" width="22" height="22" /><path d="M7 13H19M9.500 10L6.500 13L9.500 16M16.500 10L19.500 13L16.500 16" /></Svg></button>
      </div>
    </footer>
  );
}

export default function App() {
  return (
    <div className="flex h-screen w-full -scale-x-100 flex-col overflow-hidden bg-[#f5f5f5] font-['Open_Sans','Noto_Sans_CJK_SC',sans-serif]">
      <header className="shrink-0 bg-[#0a77ea]">
        <TitleBar />
        <MenuBar />
      </header>
      <Ribbon />
      <div className="flex min-h-0 flex-1">
        <Library />
        <Workspace />
        <SideStrip />
        <FillPanel />
      </div>
      <StatusBar />
    </div>
  );
}
